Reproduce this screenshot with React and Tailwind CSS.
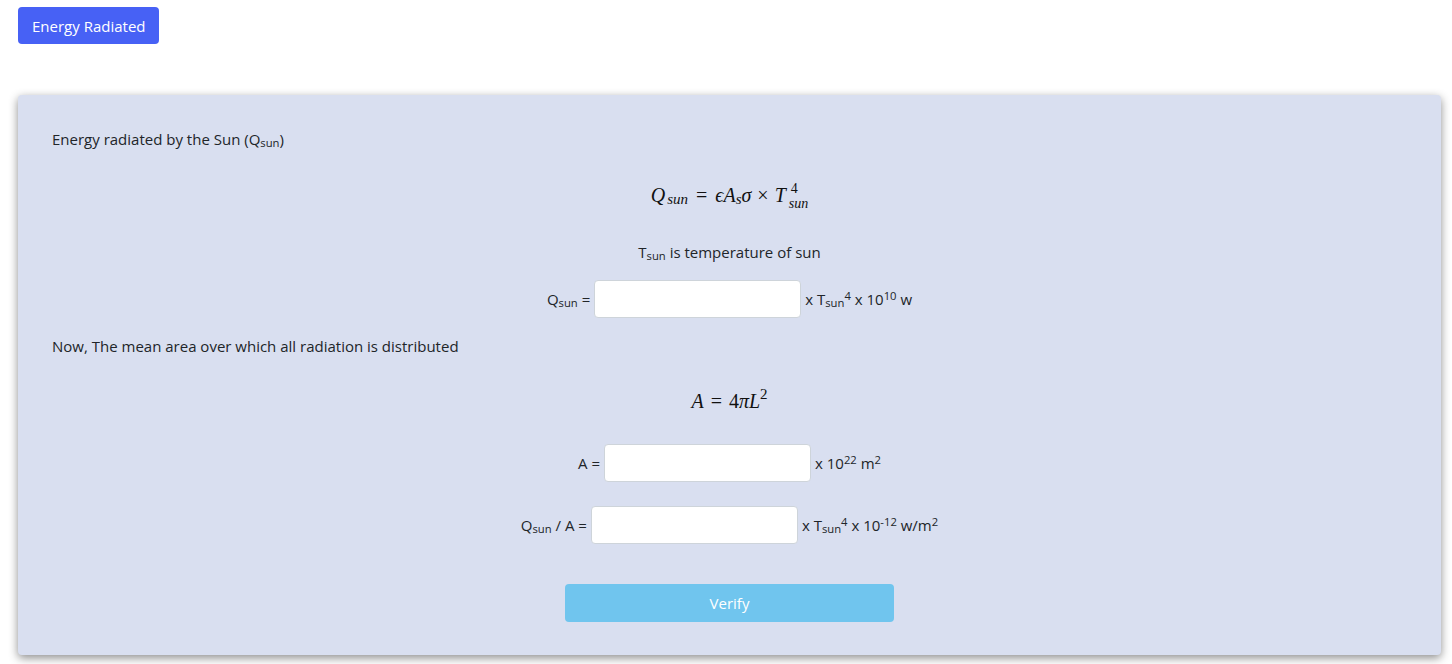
const Sub = ({ children }) => (
  <sub className="text-[0.75em] relative top-[0.2em] align-baseline">{children}</sub>
);
const Sup = ({ children }) => (
  <sup className="text-[0.75em] relative -top-[0.45em] align-baseline">{children}</sup>
);

const Field = () => (
  <input
    type="text"
    className="w-[207px] h-[38px] mx-[4px] bg-white border border-[#ced4da] rounded-[4px] px-3 outline-none"
  />
);

const Math = ({ children }) => (
  <div
    className="h-[30px] flex items-center justify-center text-[20px] text-[#111]"
    style={{ fontFamily: '"Liberation Serif", "DejaVu Serif", serif' }}
  >
    {children}
  </div>
);

const App = () => {
  return (
    <div
      className="min-h-screen bg-white text-[#212529] text-[15px] leading-6"
      style={{ fontFamily: '"Open Sans", "Noto Sans", sans-serif' }}
    >
      <div className="pt-[7px] pl-[18px]">
        <button className="h-[37px] px-[14px] bg-[#4761f5] text-white rounded-[4px] text-[15px]">
          Energy Radiated
        </button>
      </div>

      <div className="ml-[18px] mr-[11px] mt-[51px] bg-[#d9dff0] rounded-[4px] shadow-[0_3px_10px_rgba(0,0,0,0.45)] pt-[32px] pb-[33px] px-[34px]">
        <p>
          Energy radiated by the Sun (Q<Sub>sun</Sub>)
        </p>

        <div className="mt-[29px]">
          <Math>
            <i>Q</i>
            <i className="text-[15px] relative top-[4px] ml-[2px]">sun</i>
            <span className="mx-[8px]">=</span>
            <i>ϵA</i>
            <i className="text-[15px] relative top-[4px]">s</i>
            <i>σ</i>
            <span className="mx-[6px]">×</span>
            <i className="mr-[1px]">T</i>
            <span className="inline-flex flex-col leading-[12px] text-[14px] ml-[2px]">
              <span className="pl-[2px]">4</span>
              <i className="relative top-[3px]">sun</i>
            </span>
          </Math>
        </div>

        <p className="mt-[30px] text-center">
          T<Sub>sun</Sub> is temperature of sun
        </p>

        <div className="mt-[16px] flex items-center justify-center">
          <span>
            Q<Sub>sun</Sub> =
          </span>
          <Field />
          <span>
            x T<Sub>sun</Sub>
            <Sup>4</Sup> x 10<Sup>10</Sup> w
          </span>
        </div>

        <p className="mt-[16px]">Now, The mean area over which all radiation is distributed</p>

        <div className="mt-[28px]">
          <Math>
            <i>A</i>
            <span className="mx-[7px]">=</span>
            <span>4</span>
            <i>πL</i>
            <span className="text-[15px] relative -top-[7px]">2</span>
          </Math>
        </div>

        <div className="mt-[28px] flex items-center justify-center">
          <span>A =</span>
          <Field />
          <span>
            x 10<Sup>22</Sup> m<Sup>2</Sup>
          </span>
        </div>

        <div className="mt-[24px] flex items-center justify-center">
          <span>
            Q<Sub>sun</Sub> / A =
          </span>
          <Field />
          <span>
            x T<Sub>sun</Sub>
            <Sup>4</Sup> x 10<Sup>-12</Sup> w/m<Sup>2</Sup>
          </span>
        </div>

        <div className="mt-[40px] flex justify-center">
          <button className="w-[329px] h-[38px] bg-[#70c5ee] text-white rounded-[4px] text-[15px]">
            Verify
          </button>
        </div>
      </div>
    </div>
  );
};

export default App;
